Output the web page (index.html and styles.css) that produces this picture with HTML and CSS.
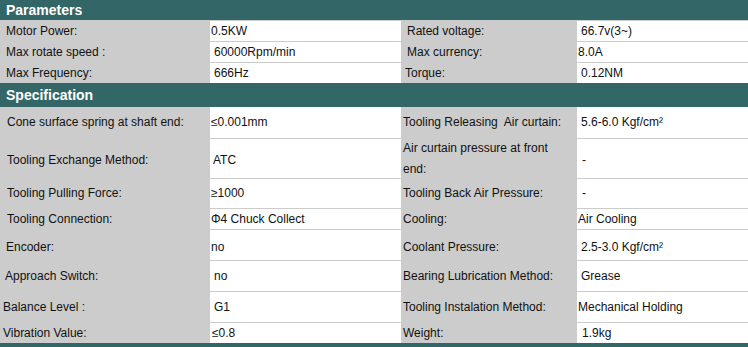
FILE: index.html
```html
<!DOCTYPE html>
<html lang="en">
<head>
<meta charset="utf-8">
<title>Spindle Parameters</title>
<link rel="stylesheet" href="styles.css">
</head>
<body>
<div class="sheet">
  <div class="bar bar-params">Parameters</div>
  <div class="grid grid-params">
    <div class="lbl">Motor Power:</div>
    <div class="val v1">0.5KW</div>
    <div class="lbl lbl-r l6">Rated voltage:</div>
    <div class="val v4">66.7v(3~)</div>

    <div class="lbl">Max rotate speed :</div>
    <div class="val v4">60000Rpm/min</div>
    <div class="lbl lbl-r l6">Max currency:</div>
    <div class="val v1">8.0A</div>

    <div class="lbl">Max Frequency:</div>
    <div class="val v4">666Hz</div>
    <div class="lbl lbl-r l4">Torque:</div>
    <div class="val v4">0.12NM</div>
  </div>

  <div class="bar bar-spec">Specification</div>
  <div class="grid grid-spec">
    <div class="lbl l7">Cone surface spring at shaft end:</div>
    <div class="val v1">≤0.001mm</div>
    <div class="lbl lbl-r">Tooling Releasing&nbsp; Air curtain:</div>
    <div class="val v4">5.6-6.0 Kgf/cm²</div>

    <div class="lbl l7 low">Tooling Exchange Method:</div>
    <div class="val v3 low">ATC</div>
    <div class="lbl lbl-r">Air curtain pressure at front<br>end:</div>
    <div class="val v5 low">-</div>

    <div class="lbl l7">Tooling Pulling Force:</div>
    <div class="val v1">≥1000</div>
    <div class="lbl lbl-r">Tooling Back Air Pressure:</div>
    <div class="val v5">-</div>

    <div class="lbl l7">Tooling Connection:</div>
    <div class="val v1">Φ4 Chuck Collect</div>
    <div class="lbl lbl-r">Cooling:</div>
    <div class="val v1">Air Cooling</div>

    <div class="lbl l6 low">Encoder:</div>
    <div class="val v1 low">no</div>
    <div class="lbl lbl-r low">Coolant Pressure:</div>
    <div class="val v4 low">2.5-3.0 Kgf/cm²</div>

    <div class="lbl l5">Approach Switch:</div>
    <div class="val v4">no</div>
    <div class="lbl lbl-r">Bearing Lubrication Method:</div>
    <div class="val v4">Grease</div>

    <div class="lbl l3">Balance Level :</div>
    <div class="val v4">G1</div>
    <div class="lbl lbl-r">Tooling Instalation Method:</div>
    <div class="val v1">Mechanical Holding</div>

    <div class="lbl l3">Vibration Value:</div>
    <div class="val v2">≤0.8</div>
    <div class="lbl lbl-r">Weight:</div>
    <div class="val v5">1.9kg</div>
  </div>
  <div class="foot"></div>
</div>
</body>
</html>
```

FILE: styles.css
```css
html, body {
  margin: 0;
  padding: 0;
  background: #ffffff;
}

.sheet {
  width: 748px;
  font-family: "Liberation Sans", Arial, sans-serif;
  font-size: 12px;
  color: #111;
}

/* section title bars */
.bar {
  background: #336666;
  color: #ffffff;
  font-weight: bold;
  font-size: 14px;
  padding-left: 6px;
  display: flex;
  align-items: center;
}
.bar-params { height: 20px; }
.bar-spec { height: 24px; }

.foot {
  height: 4px;
  background: #336666;
}

/* four-column key/value table; the grey backdrop shows through the row gaps */
.grid {
  display: grid;
  grid-template-columns: 210px 191px 176px 1fr;
  row-gap: 1px;
  background: #cccccc;
}
.grid-params {
  padding-top: 1px;
  grid-template-rows: repeat(3, 20px);
}
.grid-spec {
  grid-template-rows: 31px 39px 29px 20px 30px 30px 30px 20px;
  row-gap: 1px;
}

.lbl, .val {
  display: flex;
  align-items: center;
  line-height: 21px;
  white-space: nowrap;
}
.lbl {
  padding-left: 6px;
}
.lbl-r {
  padding-left: 2px;
  white-space: normal;
}
.val {
  background: #ffffff;
}

/* per-cell text offsets */
.l3 { padding-left: 3px; }
.l4 { padding-left: 4px; }
.l5 { padding-left: 5px; }
.l6 { padding-left: 6px; }
.l7 { padding-left: 7px; }
.lbl-r.l4 { padding-left: 4px; }
.lbl-r.l6 { padding-left: 6px; }

.v1 { padding-left: 1px; }
.v2 { padding-left: 2px; }
.v3 { padding-left: 3px; }
.v4 { padding-left: 4px; }
.v5 { padding-left: 5px; }

.low { padding-top: 4px; }
```
